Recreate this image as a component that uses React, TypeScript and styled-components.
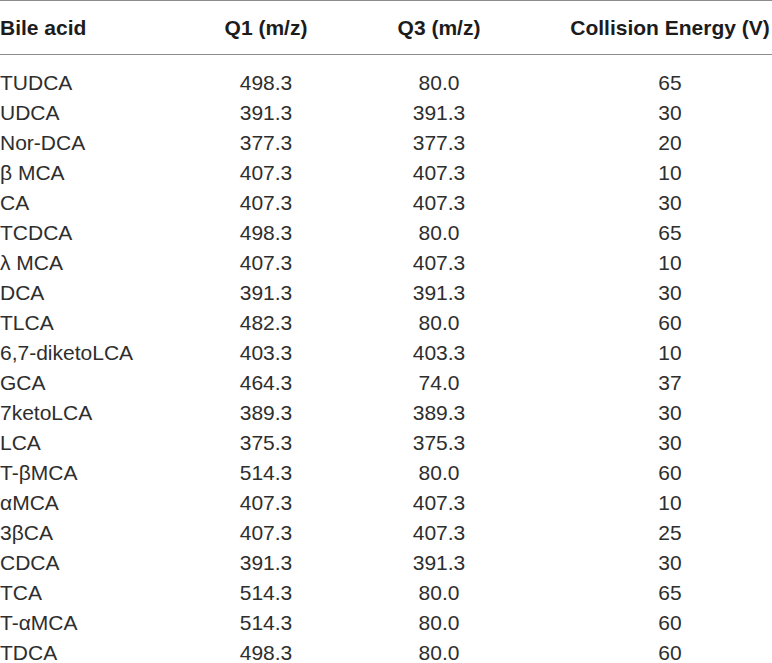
import React from 'react';
import styled, { createGlobalStyle } from 'styled-components';

const GlobalStyle = createGlobalStyle`
  html, body {
    margin: 0;
    padding: 0;
    background: #ffffff;
  }
  body {
    font-family: "Liberation Sans", Arial, sans-serif;
  }
`;

const COLUMNS = '222px 88px 258px 1fr';

const Table = styled.div`
  width: 772px;
  border-top: 1px solid #8c8c8c;
`;

const HeaderRow = styled.div`
  display: grid;
  grid-template-columns: ${COLUMNS};
  align-items: center;
  height: 53px;
  border-bottom: 1px solid #8c8c8c;
`;

const Body = styled.div`
  padding-top: 13px;
`;

const Row = styled.div`
  display: grid;
  grid-template-columns: ${COLUMNS};
  align-items: center;
  height: 30px;
`;

const HeadCell = styled.div<{ align: 'left' | 'center' }>`
  font-size: 21px;
  font-weight: 700;
  color: #1c1c1c;
  white-space: nowrap;
  text-align: ${({ align }) => align};
`;

const Cell = styled.div<{ align: 'left' | 'center' }>`
  font-size: 21px;
  line-height: 30px;
  color: #2e2e2e;
  white-space: nowrap;
  text-align: ${({ align }) => align};
`;

type Entry = [string, string, string, string];

const rows: Entry[] = [
  ['TUDCA', '498.3', '80.0', '65'],
  ['UDCA', '391.3', '391.3', '30'],
  ['Nor-DCA', '377.3', '377.3', '20'],
  ['β MCA', '407.3', '407.3', '10'],
  ['CA', '407.3', '407.3', '30'],
  ['TCDCA', '498.3', '80.0', '65'],
  ['λ MCA', '407.3', '407.3', '10'],
  ['DCA', '391.3', '391.3', '30'],
  ['TLCA', '482.3', '80.0', '60'],
  ['6,7-diketoLCA', '403.3', '403.3', '10'],
  ['GCA', '464.3', '74.0', '37'],
  ['7ketoLCA', '389.3', '389.3', '30'],
  ['LCA', '375.3', '375.3', '30'],
  ['T-βMCA', '514.3', '80.0', '60'],
  ['αMCA', '407.3', '407.3', '10'],
  ['3βCA', '407.3', '407.3', '25'],
  ['CDCA', '391.3', '391.3', '30'],
  ['TCA', '514.3', '80.0', '65'],
  ['T-αMCA', '514.3', '80.0', '60'],
  ['TDCA', '498.3', '80.0', '60'],
];

const headers = ['Bile acid', 'Q1 (m/z)', 'Q3 (m/z)', 'Collision Energy (V)'];

export default function App() {
  return (
    <>
      <GlobalStyle />
      <Table>
        <HeaderRow>
          {headers.map((h, i) => (
            <HeadCell key={h} align={i === 0 ? 'left' : 'center'}>
              {h}
            </HeadCell>
          ))}
        </HeaderRow>
        <Body>
          {rows.map((r) => (
            <Row key={r[0]}>
              {r.map((v, i) => (
                <Cell key={i} align={i === 0 ? 'left' : 'center'}>
                  {v}
                </Cell>
              ))}
            </Row>
          ))}
        </Body>
      </Table>
    </>
  );
}
